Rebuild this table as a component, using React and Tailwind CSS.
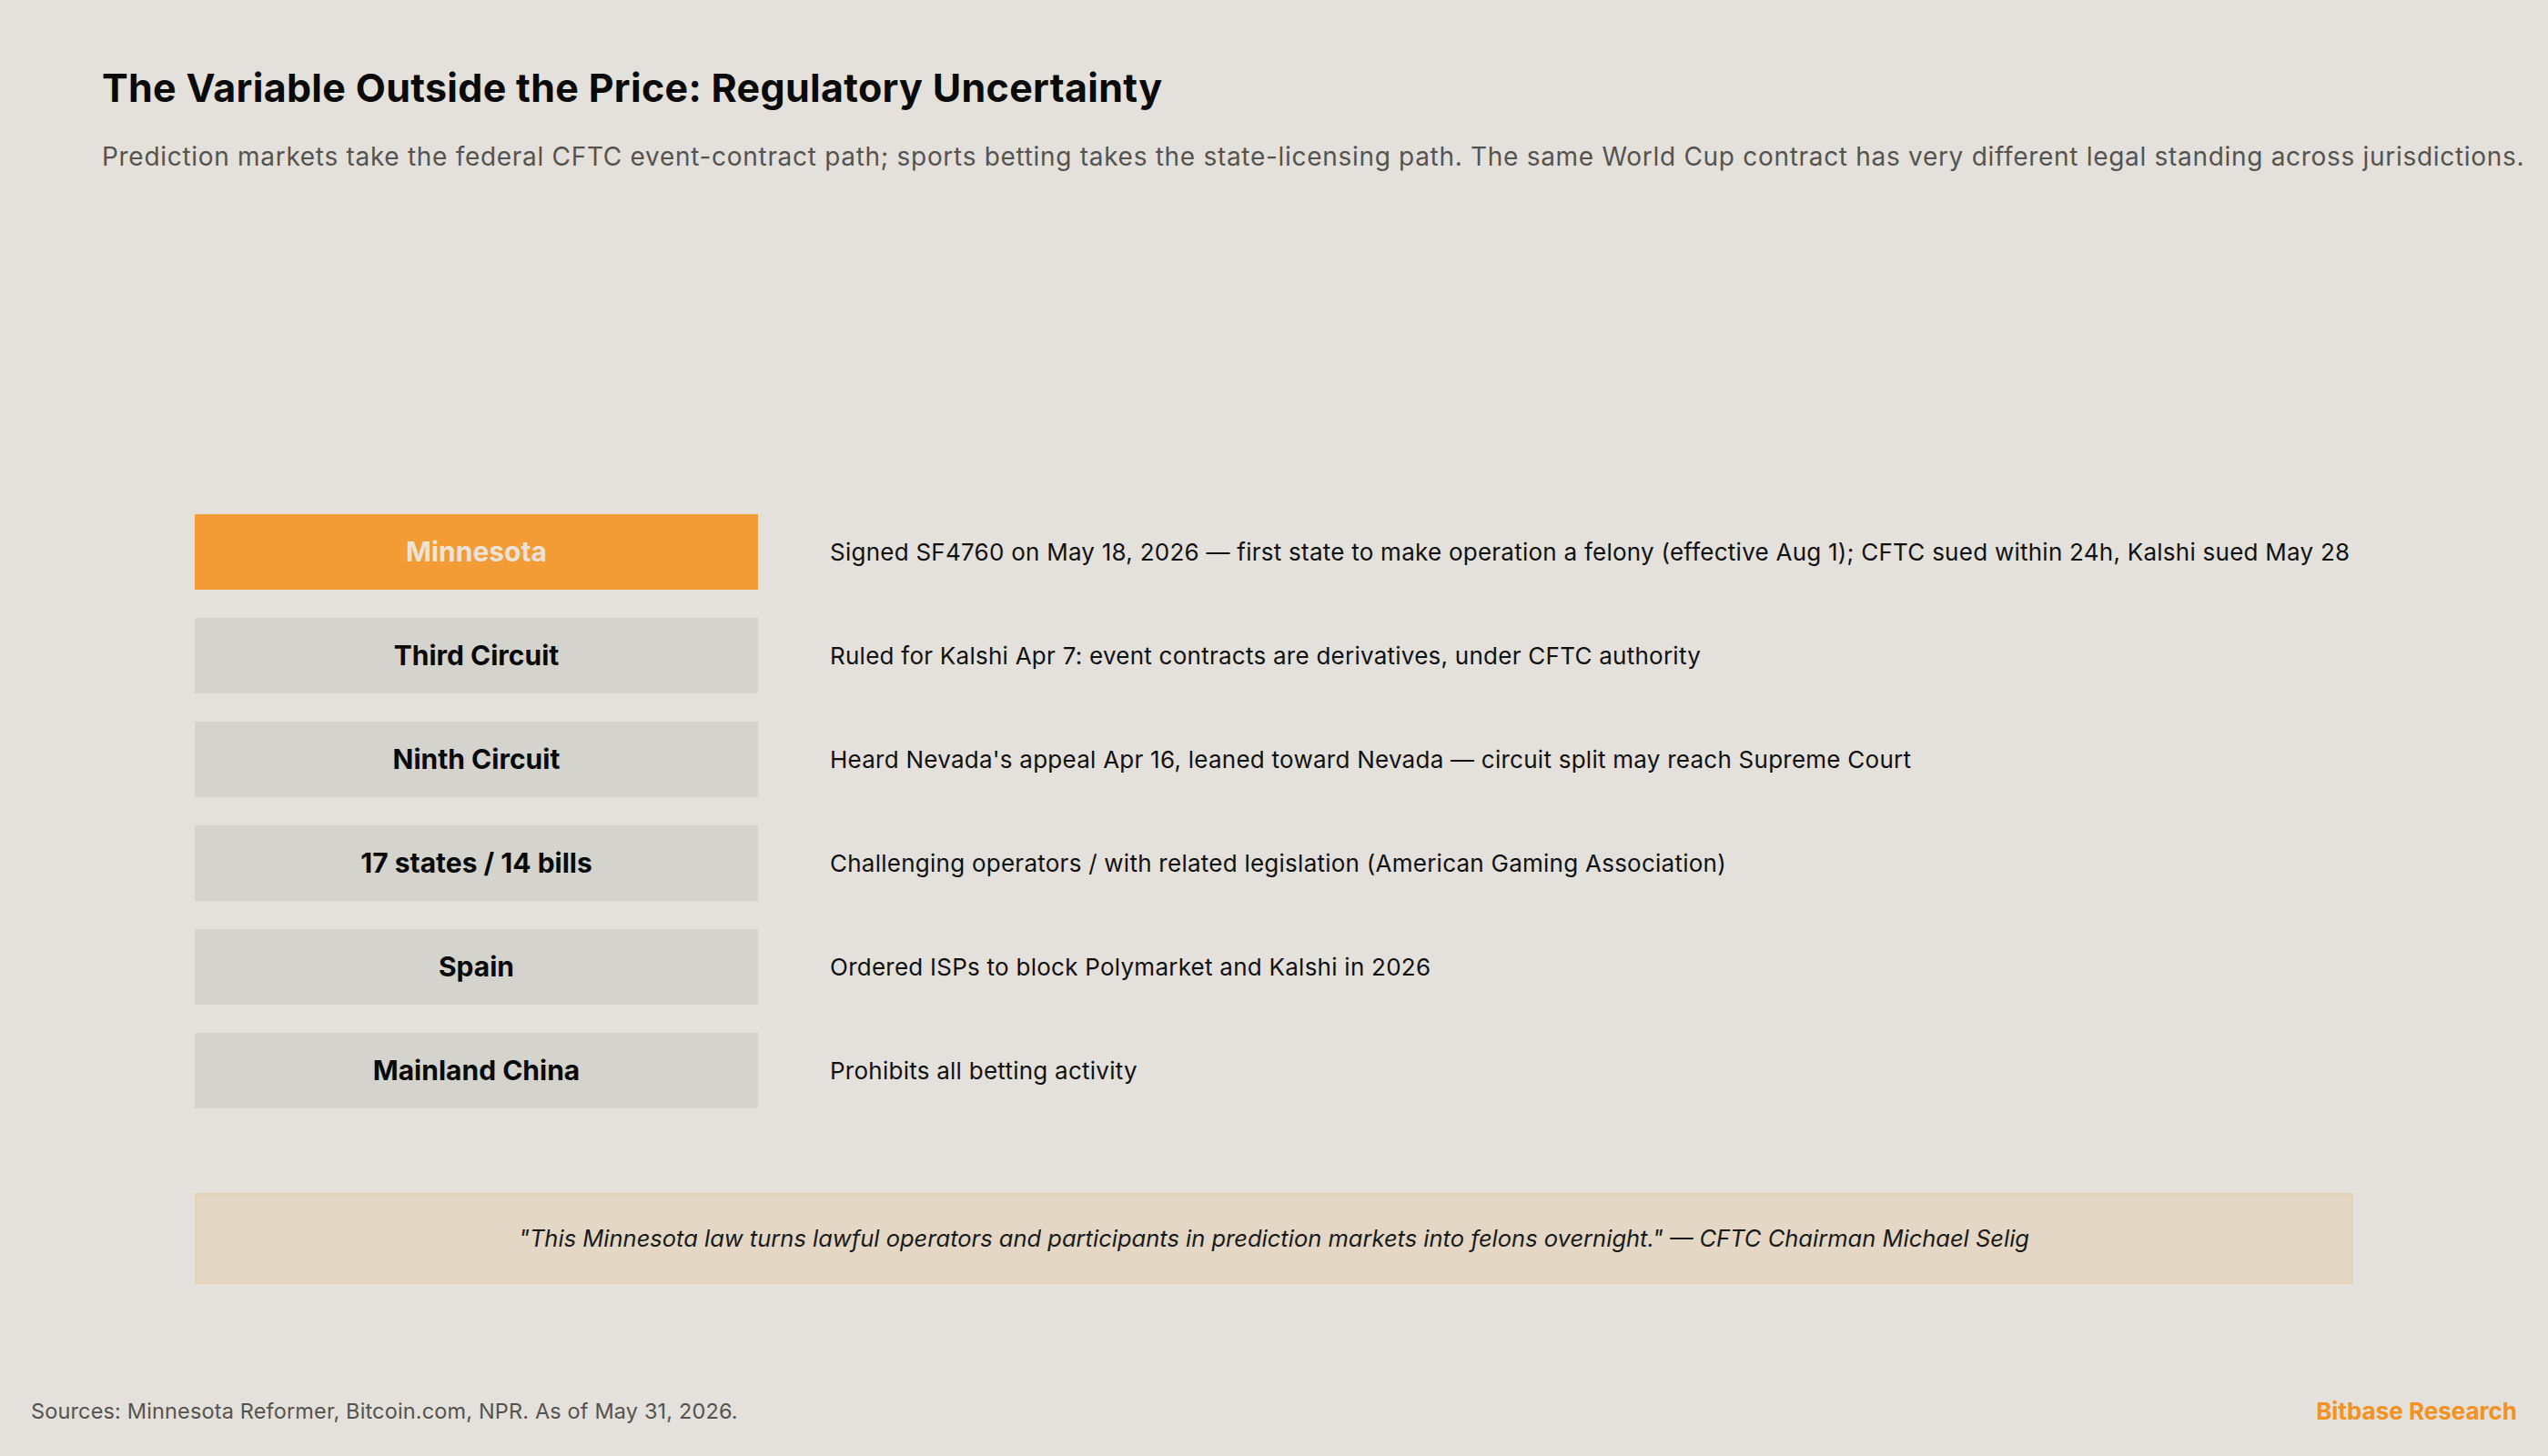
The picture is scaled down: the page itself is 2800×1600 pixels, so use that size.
import React from 'react';

const rows = [
  {
    label: 'Minnesota',
    text: 'Signed SF4760 on May 18, 2026 \u2014 first state to make operation a felony (effective Aug 1); CFTC sued within 24h, Kalshi sued May 28',
    hot: true,
  },
  { label: 'Third Circuit', text: 'Ruled for Kalshi Apr 7: event contracts are derivatives, under CFTC authority' },
  { label: 'Ninth Circuit', text: "Heard Nevada's appeal Apr 16, leaned toward Nevada \u2014 circuit split may reach Supreme Court" },
  { label: '17 states / 14 bills', text: 'Challenging operators / with related legislation (American Gaming Association)' },
  { label: 'Spain', text: 'Ordered ISPs to block Polymarket and Kalshi in 2026' },
  { label: 'Mainland China', text: 'Prohibits all betting activity' },
];

export default function App() {
  return (
    <div className="w-[2800px] h-[1600px] bg-[#e4e0db] flex flex-col font-['Inter',sans-serif] text-[#0a0a0a]">
      {/* header */}
      <div className="pl-[112px] pt-[68px]">
        <h1 className="text-[43px] leading-[56px] font-bold tracking-[0.3px]">
          The Variable Outside the Price: Regulatory Uncertainty
        </h1>
        <p className="mt-[30px] text-[28px] leading-[36px] text-[#555350] tracking-[0.7px] whitespace-nowrap">
          Prediction markets take the federal CFTC event-contract path; sports betting takes the state-licensing path. The same World Cup contract has very different legal standing across jurisdictions.
        </p>
      </div>

      {/* jurisdiction rows */}
      <div className="mx-[214px] mt-[375px] flex flex-col gap-[31px]">
        {rows.map((r) => (
          <div key={r.label} className="flex items-center">
            <div
              className={`w-[619px] h-[83px] shrink-0 flex items-center justify-center text-[30px] font-bold ${
                r.hot ? 'bg-[#f39b35] text-[#ebe3d9]' : 'bg-[#d4d3ce] text-[#0a0a0a]'
              }`}
            >
              {r.label}
            </div>
            <p className="ml-[79px] text-[26px] text-[#111] tracking-[0.25px] whitespace-nowrap">{r.text}</p>
          </div>
        ))}
      </div>

      {/* quote */}
      <div className="mx-[214px] mt-[93px] h-[100px] border-2 border-[#e7d1b3] bg-[#e4d7c5] flex items-center justify-center">
        <p className="italic text-[25.5px] text-[#1a1a1a]">
          "This Minnesota law turns lawful operators and participants in prediction markets into felons overnight." &mdash; CFTC Chairman Michael Selig
        </p>
      </div>

      {/* footer */}
      <div className="mt-auto px-[34px] pb-[30px] flex items-center justify-between">
        <span className="text-[23.5px] text-[#555350] tracking-[0.15px]">Sources: Minnesota Reformer, Bitcoin.com, NPR. As of May 31, 2026.</span>
        <span className="text-[26px] font-bold text-[#f39121]">Bitbase Research</span>
      </div>
    </div>
  );
}
